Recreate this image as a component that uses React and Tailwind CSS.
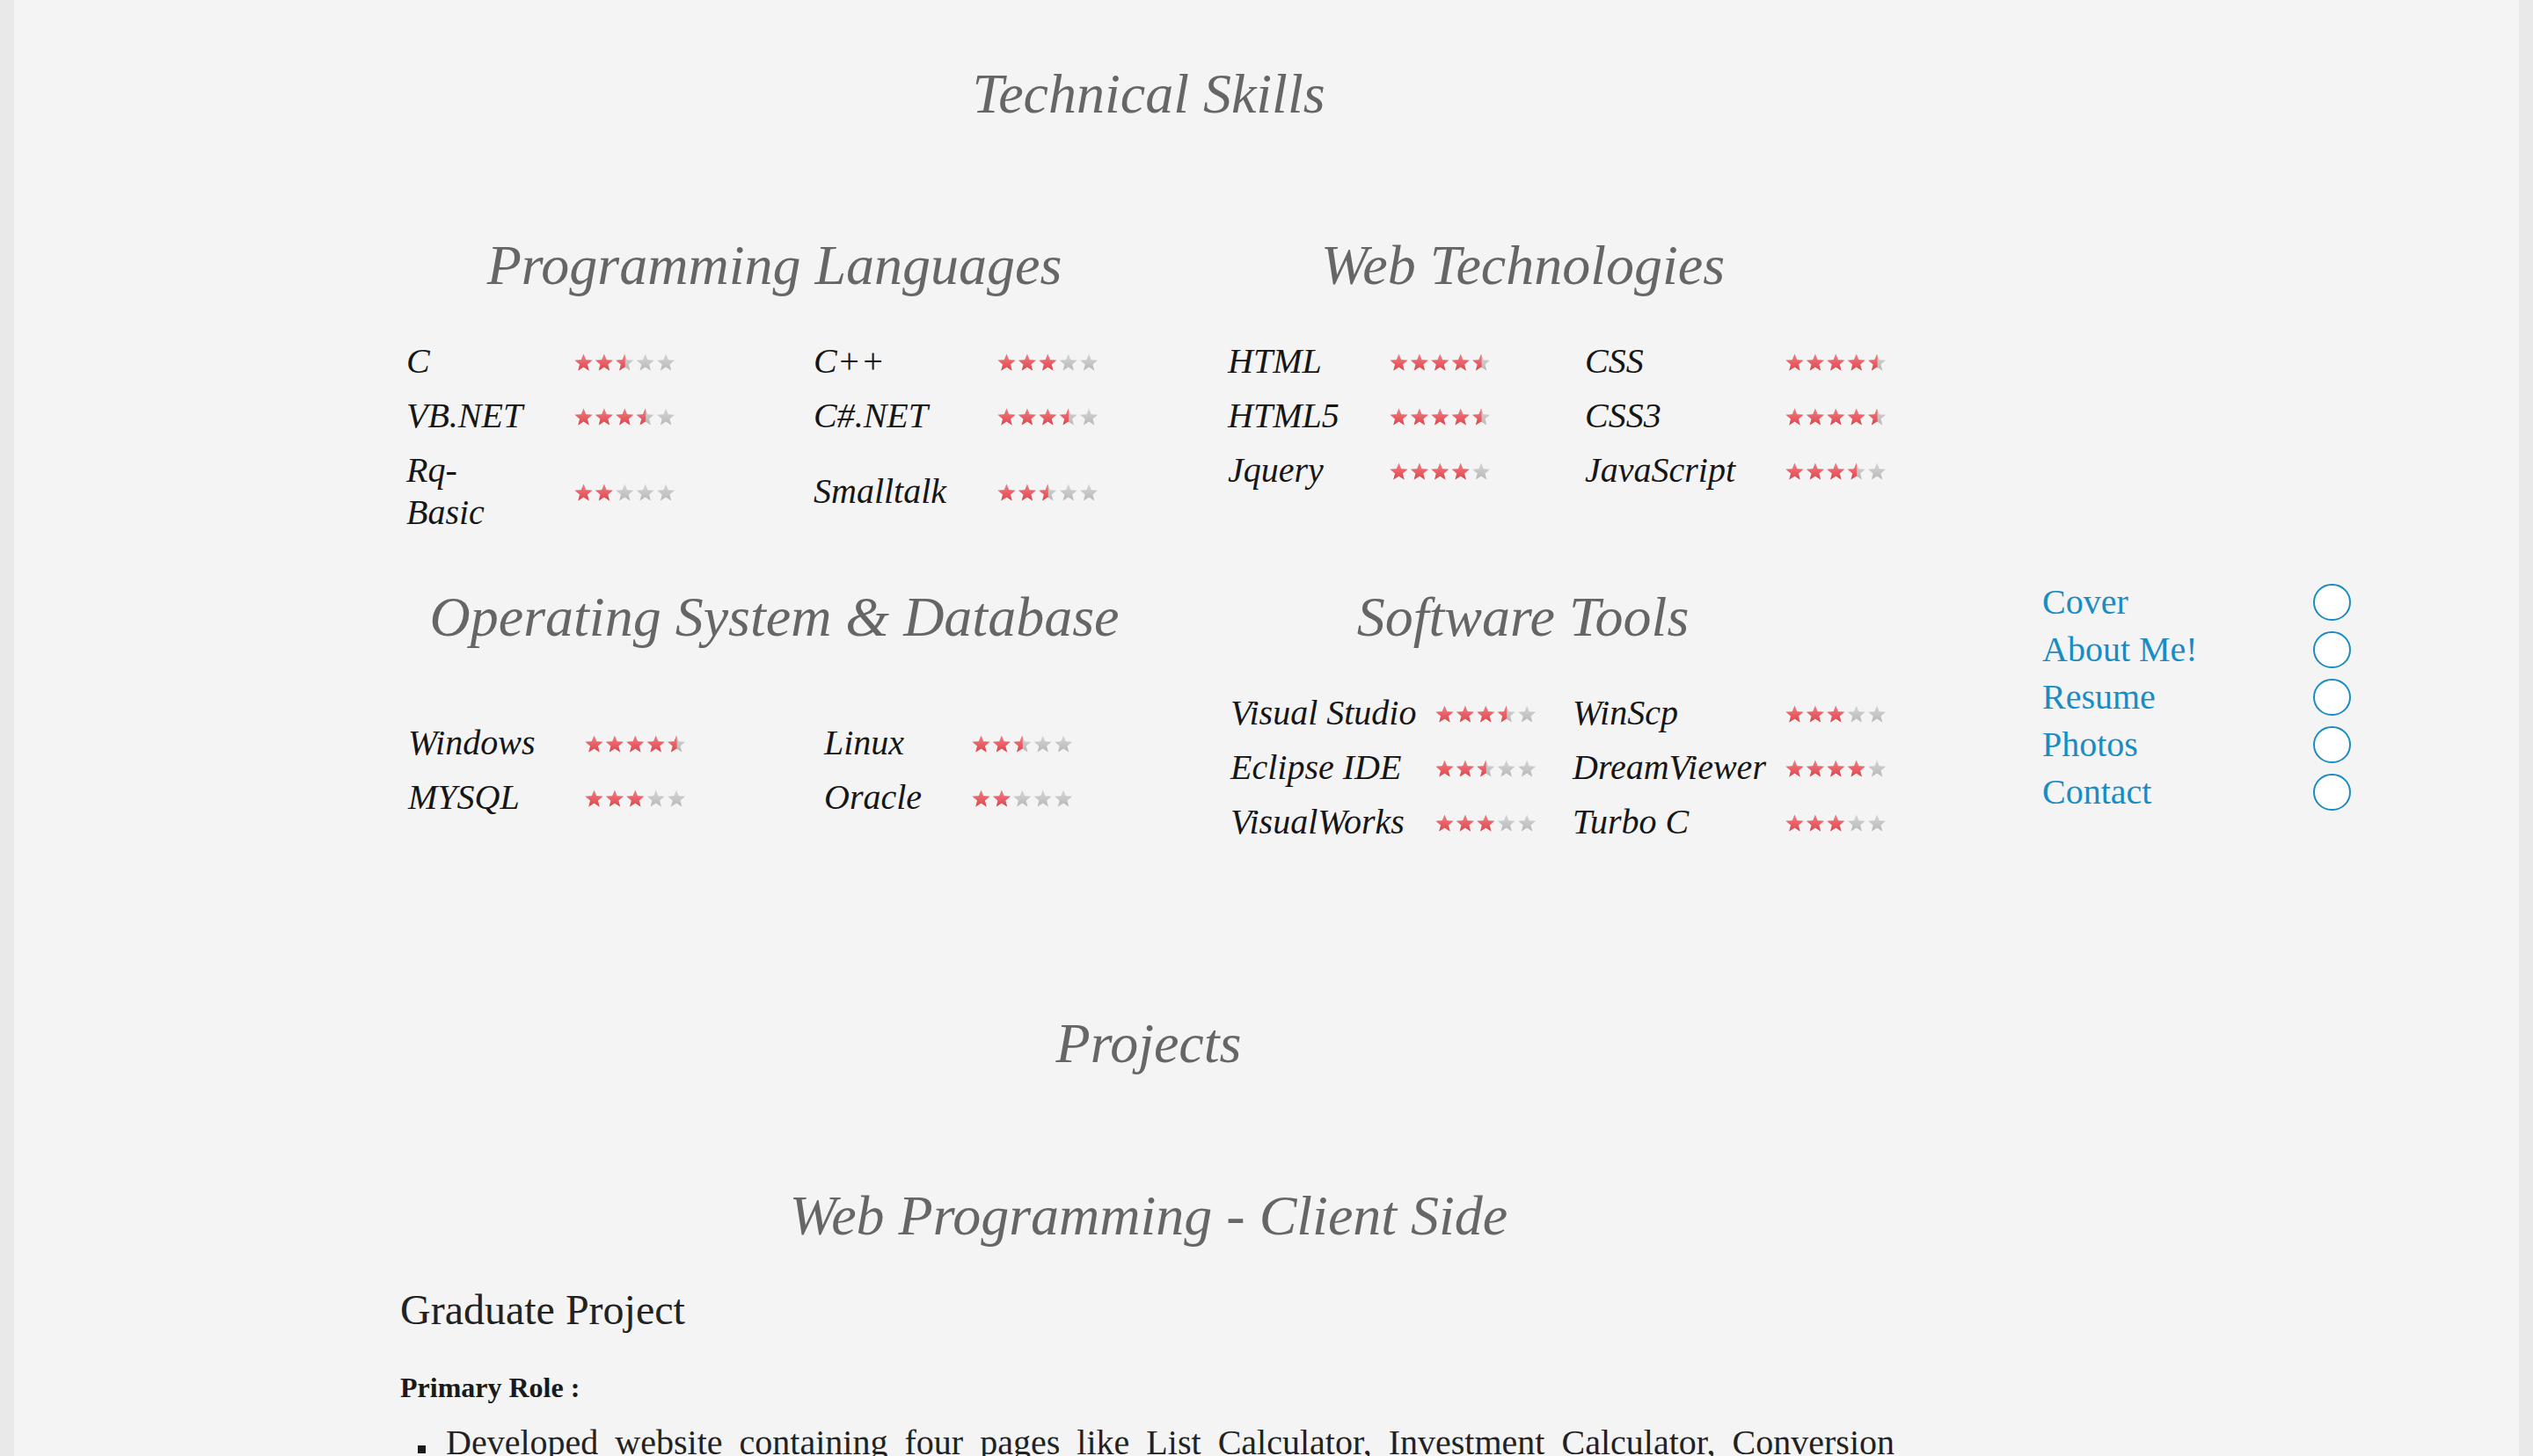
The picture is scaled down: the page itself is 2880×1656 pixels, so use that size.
import React, { useId } from "react";

const STAR =
  "10.5,0.5 13.2,7.3 20.49,7.76 14.9,12.4 16.67,19.49 10.5,15.6 4.33,19.49 6.1,12.4 0.51,7.76 7.8,7.3";

function Stars({ value }) {
  const raw = useId();
  const id = "s" + raw.replace(/[^a-zA-Z0-9]/g, "");
  const pitch = 23.4;
  const full = Math.floor(value);
  const half = value - full >= 0.5;
  const w = full * pitch + (half ? 11 : 0);
  const idx = [0, 1, 2, 3, 4];
  return (
    <svg width="118" height="21" viewBox="0 0 118 21" className="block">
      <defs>
        <linearGradient id={id + "r"} x1="0" y1="0" x2="0" y2="1">
          <stop offset="0" stopColor="#f27f84" />
          <stop offset="1" stopColor="#e0444c" />
        </linearGradient>
        <linearGradient id={id + "g"} x1="0" y1="0" x2="0" y2="1">
          <stop offset="0" stopColor="#d6d6d6" />
          <stop offset="1" stopColor="#b8b8b8" />
        </linearGradient>
        <clipPath id={id + "c"}>
          <rect x="0" y="0" width={w} height="21" />
        </clipPath>
      </defs>
      {idx.map((i) => (
        <polygon key={i} points={STAR} transform={`translate(${i * pitch},0)`} fill={`url(#${id}g)`} />
      ))}
      <g clipPath={`url(#${id}c)`}>
        {idx.map((i) => (
          <polygon key={i} points={STAR} transform={`translate(${i * pitch},0)`} fill={`url(#${id}r)`} />
        ))}
      </g>
    </svg>
  );
}

function Row({ cols, items }) {
  return (
    <div className={`grid ${cols} items-center py-[7px]`}>
      <div className="leading-[48px]">{items[0]}</div>
      <div className="pt-[2px]"><Stars value={items[1]} /></div>
      <div className="leading-[48px]">{items[2]}</div>
      <div className="pt-[2px]"><Stars value={items[3]} /></div>
    </div>
  );
}

const Heading = ({ children }) => (
  <h2 className="text-center text-[64px] leading-[64px] italic text-[#666666] font-normal">{children}</h2>
);

export default function App() {
  const progCols = "grid-cols-[191px_272px_209px_130px]";
  const webCols = "grid-cols-[184px_222px_228px_127px]";
  const osCols = "grid-cols-[201px_272px_168px_130px]";
  const swCols = "grid-cols-[233px_156px_242px_127px]";
  return (
    <div className="h-[1656px] w-[2880px] overflow-hidden bg-[#f4f4f4] flex flex-col font-['Liberation_Serif','Times_New_Roman',serif] text-[40px] text-[#161616]">
      <div className="h-[3px] bg-[#e4e4e4]" />
      <div className="h-px bg-[#8e9db2]" />
      <div className="flex flex-1">
        <div className="w-[16px] bg-[#e9e9e9]" />
        <div className="flex flex-1">
          <main className="ml-[439px] w-[1702px] shrink-0">
            <h1 className="mt-[75px] text-center text-[64px] leading-[64px] italic text-[#666666]">Technical Skills</h1>

            <section className="mt-[131px] grid grid-cols-2 items-start">
              <div>
                <Heading>Programming Languages</Heading>
                <div className="mt-[46px] pl-[7px] italic">
                  <Row cols={progCols} items={["C", 2.5, "C++", 3]} />
                  <Row cols={progCols} items={["VB.NET", 3.5, "C#.NET", 3.5]} />
                  <Row cols={progCols} items={[<>Rq-<br />Basic</>, 2, "Smalltalk", 2.5]} />
                </div>
              </div>
              <div>
                <Heading>Web Technologies</Heading>
                <div className="mt-[46px] pl-[90px] italic">
                  <Row cols={webCols} items={["HTML", 4.5, "CSS", 4.5]} />
                  <Row cols={webCols} items={["HTML5", 4.5, "CSS3", 4.5]} />
                  <Row cols={webCols} items={["Jquery", 4, "JavaScript", 3.5]} />
                </div>
              </div>
            </section>

            <section className="mt-[56px]">
              <div className="grid grid-cols-2">
                <Heading>Operating System &amp; Database</Heading>
                <Heading>Software Tools</Heading>
              </div>
              <div className="mt-[46px] grid grid-cols-2 items-center italic">
                <div className="pl-[9px] pt-[6px]">
                  <Row cols={osCols} items={["Windows", 4.5, "Linux", 2.5]} />
                  <Row cols={osCols} items={["MYSQL", 3, "Oracle", 2]} />
                </div>
                <div className="pl-[93px]">
                  <Row cols={swCols} items={["Visual Studio", 3.5, "WinScp", 3]} />
                  <Row cols={swCols} items={["Eclipse IDE", 2.5, "DreamViewer", 4]} />
                  <Row cols={swCols} items={["VisualWorks", 3, "Turbo C", 3]} />
                </div>
              </div>
            </section>

            <h2 className="mt-[189px] text-center text-[64px] leading-[64px] italic text-[#666666]">Projects</h2>
            <h3 className="mt-[132px] text-center text-[64px] leading-[64px] italic text-[#666666]">Web Programming - Client Side</h3>
            <h4 className="mt-[48px] text-[48px] leading-[54px] text-[#222222]">Graduate Project</h4>
            <p className="mt-[43px] text-[32px] leading-[37px] font-bold text-[#1a1a1a]">Primary Role :</p>
            <ul className="mt-[20px]">
              <li className="flex">
                <span className="ml-[20px] mt-[27px] h-[9px] w-[9px] shrink-0 bg-[#1a1a1a]" />
                <span className="ml-[23px] w-[1647px] text-justify leading-[48px] text-[#222222]">
                  Developed website containing four pages like List Calculator, Investment Calculator, Conversion
                  Calculator and Temperature Calculator using HTML, CSS, JavaScript and jQuery with validations.
                </span>
              </li>
            </ul>
          </main>

          <nav className="ml-[165px] mt-[658px] shrink-0">
            {["Cover", "About Me!", "Resume", "Photos", "Contact"].map((t) => (
              <div key={t} className="grid grid-cols-[308px_43px] items-center h-[54px]">
                <span className="leading-[54px] text-[#1a8cc4]">{t}</span>
                <span className="block h-[42px] w-[43px] rounded-full border-2 border-[#1a8cc4] bg-white" />
              </div>
            ))}
          </nav>
        </div>
        <div className="w-[16px] bg-[#e9e9e9]" />
      </div>
    </div>
  );
}
